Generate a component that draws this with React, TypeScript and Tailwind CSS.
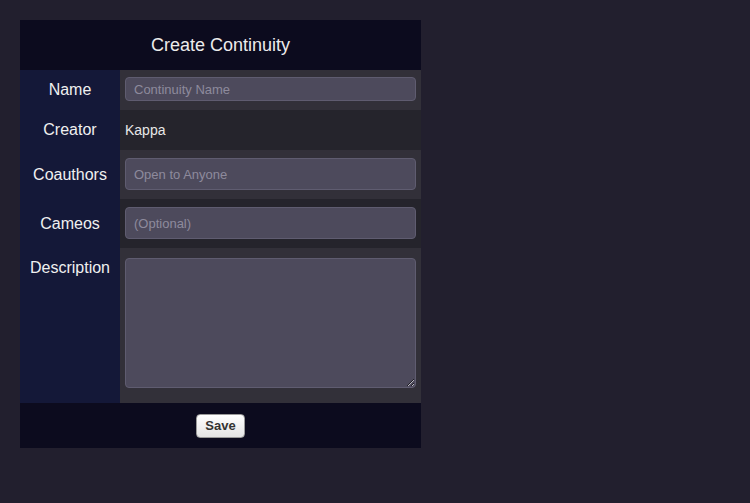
import React from "react";

export default function App() {
  const font = { fontFamily: '"Liberation Sans", Arial, sans-serif' };
  const inputCls =
    "w-full rounded-[4px] border border-[#5f5c70] bg-[#4d4a5c] px-[8px] text-[13px] text-[#e5e5e5] placeholder:text-[#8e8a9c] outline-none";
  return (
    <div className="min-h-[503px] w-[750px] bg-[#221f2e] p-[20px]" style={font}>
      <div className="flex w-[401px] flex-col">
        <div className="flex h-[50px] items-center justify-center bg-[#0c0b1e] text-[18px] text-[#ececec]">
          Create Continuity
        </div>
        <div className="flex h-[40px]">
          <div className="flex w-[100px] items-center justify-center bg-[#141838] text-[16px] text-[#f0f0f0]">Name</div>
          <div className="flex flex-1 items-start bg-[#323039] px-[5px] pt-[7px]">
            <input className={`${inputCls} h-[24px]`} placeholder="Continuity Name" />
          </div>
        </div>
        <div className="flex h-[40px]">
          <div className="flex w-[100px] items-center justify-center bg-[#141838] text-[16px] text-[#f0f0f0]">Creator</div>
          <div className="flex flex-1 items-center bg-[#25242c] px-[5px] text-[14px] text-[#e8e8e8]">Kappa</div>
        </div>
        <div className="flex h-[49px]">
          <div className="flex w-[100px] items-center justify-center bg-[#141838] text-[16px] text-[#f0f0f0]">Coauthors</div>
          <div className="flex flex-1 items-start bg-[#323039] px-[5px] pt-[8px]">
            <input className={`${inputCls} h-[32px]`} placeholder="Open to Anyone" />
          </div>
        </div>
        <div className="flex h-[49px]">
          <div className="flex w-[100px] items-center justify-center bg-[#141838] text-[16px] text-[#f0f0f0]">Cameos</div>
          <div className="flex flex-1 items-start bg-[#25242c] px-[5px] pt-[8px]">
            <input className={`${inputCls} h-[32px]`} placeholder="(Optional)" />
          </div>
        </div>
        <div className="flex h-[155px]">
          <div className="flex w-[100px] justify-center bg-[#141838] pt-[8px] text-[16px] text-[#f0f0f0]">Description</div>
          <div className="flex flex-1 items-start bg-[#323039] px-[5px] pt-[10px]">
            <textarea className={`${inputCls} block h-[130px] py-[4px]`} />
          </div>
        </div>
        <div className="flex h-[45px] items-center justify-center bg-[#0c0b1e]">
          <button className="h-[24px] rounded-[4px] border border-[#9a9a9a] bg-gradient-to-b from-white to-[#e4e4e4] px-[8px] text-[13px] font-bold text-[#333]">
            Save
          </button>
        </div>
      </div>
    </div>
  );
}
